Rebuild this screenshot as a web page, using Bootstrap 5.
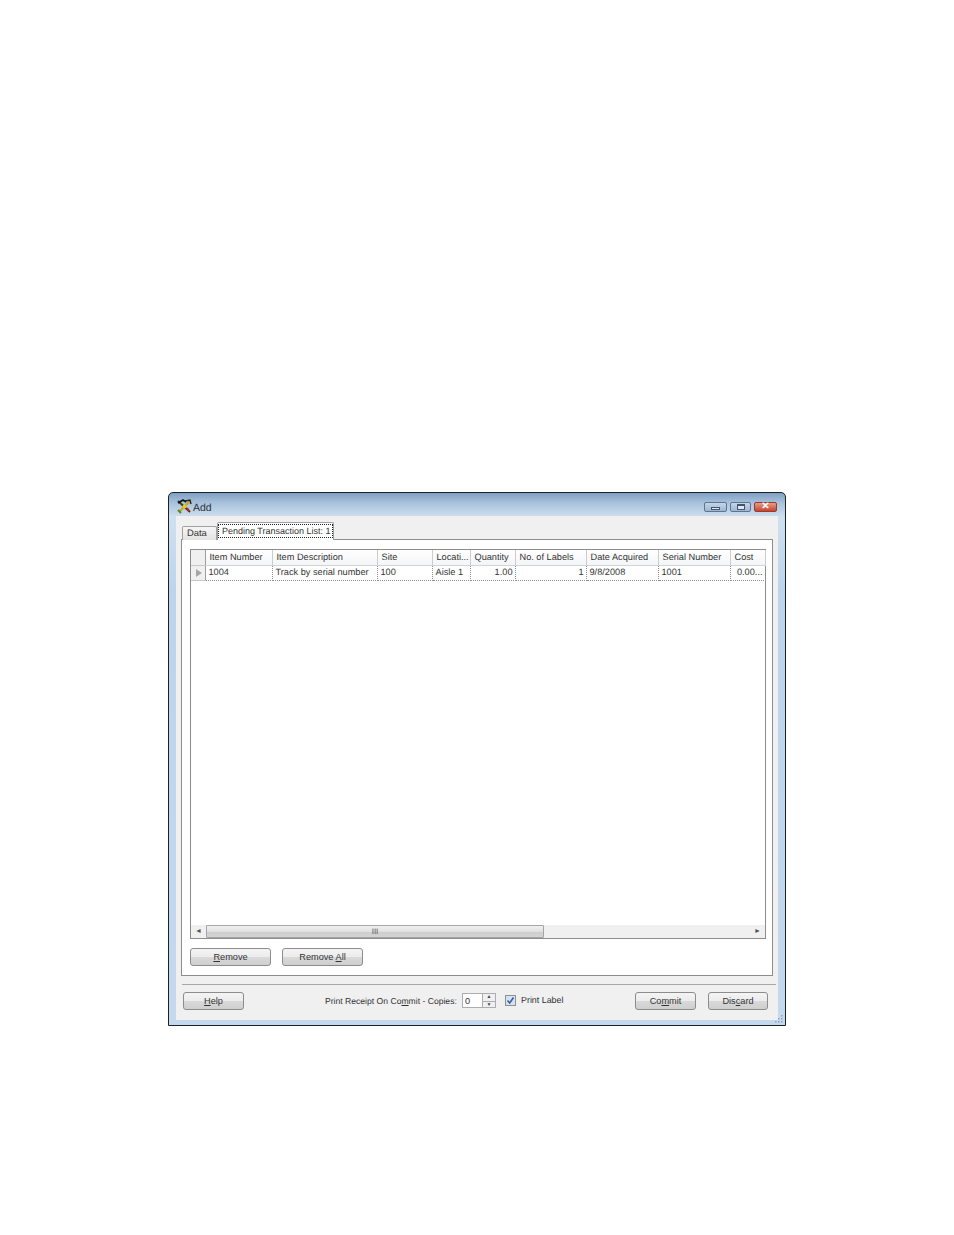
<!DOCTYPE html>
<html lang="en">
<head>
<meta charset="utf-8">
<title>Add</title>
<link href="https://cdn.jsdelivr.net/npm/bootstrap@5.3.0/dist/css/bootstrap.min.css" rel="stylesheet">
<style>
html, body { background: #fff; }
body { padding: 492px 0 0 168px; font-family: "Liberation Sans", Arial, sans-serif; font-size: 9.2px; line-height: 12px; color: #333; margin: 0; text-rendering: geometricPrecision; }
.win-frame { position: relative; width: 618px; height: 534px; border: 1px solid #1c2126; border-radius: 5px 5px 0 0; background: linear-gradient(180deg, #7f9fc3 0, #a9c2dc 10px, #cfe0f0 24px, #bcd4ec 100px, #c4d9ee 100%); }
.win-title { height: 23px; padding: 6px 8px 0 8px; }
.win-title-text { font-size: 10.5px; line-height: 14px; color: #2b3138; margin: 2px 0 0 1px; }
.win-ctl { width: 23px; height: 10px; border: 1px solid #5d7590; border-radius: 2px; background: linear-gradient(180deg, #c5d6e8, #9db6d0); margin-top: 3px; margin-left: 3px; }
.win-ctl-max { width: 21px; }
.win-ctl-close { border-color: #9a3a2a; background: linear-gradient(180deg, #e2a08e, #c9412e); color: #fff; font-weight: 700; font-size: 10px; line-height: 8px; }
.win-ctl i { display: block; border: 1px solid #42556b; background: #dfe8f2; }
.glyph-min { width: 9px; height: 3px; margin-top: 4px; }
.glyph-max { width: 8px; height: 6px; margin-top: 1px; border-top-width: 2px !important; }
.win-client { margin: 0 7px; height: 504px; background: #f0f0f0; padding: 6px 5px 0; }
.tab-strip { height: 18px; border: 0; align-items: flex-end; position: relative; z-index: 1; padding-left: 1px; }
.tab-strip .nav-link { font-size: 9.4px; line-height: 12px; color: #333; border: 1px solid #a0a0a0; border-bottom: 0; border-radius: 2px 2px 0 0; margin: 0; background: linear-gradient(180deg, #f6f6f6, #e2e2e2); height: 14px; width: 35px; padding: 0 4px; }
.tab-strip .nav-link.active { background: #fff; height: 18px; width: 117px; padding: 1px 0 0; font-size: 9px; }
.tab-focus { display: block; border: 1px dotted #222; padding: 0 3px; height: 14px; line-height: 12px; white-space: nowrap; }
.tab-panel { height: 437px; margin-top: -1px; background: #fff; border: 1px solid #8d8d8d; padding: 9px 6px 0 8px; }
.grid-box { height: 390px; border: 1px solid #8c8c8c; background: #fff; position: relative; }
.grid-table { table-layout: fixed; width: 574px; margin: 0; border-collapse: collapse; color: #333; }
.grid-table th, .grid-table td { padding: 0 2px 1px 3px; height: 15px; font-size: 9.2px; line-height: 12px; font-weight: 400; white-space: nowrap; overflow: hidden; background: transparent; color: #333; vertical-align: middle; }
.grid-table th { padding: 0 0 1px 4px; background: linear-gradient(180deg, #fff, #f4f5f7); border-right: 1px solid #c9ccd0; border-bottom: 1px solid #d2d4d7; }
.grid-table td { border-right: 1px dotted #8d8d8d; border-bottom: 1px dotted #8d8d8d; }
.grid-table th.sel-col, .grid-table td.sel-col { background: #f0f0f0; border-right: 1px solid #9d9d9d; border-bottom: 1px solid #c8c8c8; padding: 0; }
.row-mark { display: block; width: 0; height: 0; margin-left: 5px; border-left: 6px solid #a6a6a6; border-top: 4px solid transparent; border-bottom: 4px solid transparent; }
.scroll-bar { position: absolute; left: 0; right: 0; bottom: 0; height: 13px; background: #f0f0f0; display: flex; align-items: center; }
.scroll-arrow { width: 15px; text-align: center; color: #555; font-size: 7px; line-height: 13px; }
.scroll-thumb { width: 338px; height: 13px; border: 1px solid #a5a5a5; border-radius: 1px; background: linear-gradient(180deg, #f1f1f1 0, #e0e0e0 50%, #cecece 51%, #d3d3d3 100%); text-align: center; font-size: 8px; line-height: 11px; color: #555; }
.win-btn { font-size: 9.2px; line-height: 12px; color: #333; padding: 0; width: 81px; height: 18px; border: 1px solid #8c8c8c; border-radius: 3px; background: linear-gradient(180deg, #f4f4f4 0, #ececec 48%, #d9d9d9 52%, #cfcfcf 100%); }
.win-btn:hover { color: #333; border-color: #8c8c8c; }
.btn-row { margin-top: 9px; gap: 11px; }
.btn-short { width: 61px; }
.btn-discard { width: 60px; }
.foot-rule { margin: 8px -3px 0 1px; border: 0; border-top: 1px solid #a8a8a8; opacity: 1; height: 0; }
.foot-row { margin-top: 7px; padding-left: 2px; height: 20px; align-items: flex-start; }
.copies-label { margin: 3px 0 0 81px; white-space: nowrap; width: 132px; font-size: 8.6px; }
.copies-input { width: 21px; height: 15px; margin: 1px 0 0 5px; border: 1px solid #abadb3; background: #fff; padding: 0 2px; font-size: 9.2px; line-height: 11px; border-radius: 0; box-shadow: none; color: #333; }
.copies-spin { width: 13px; height: 15px; margin-top: 1px; border: 1px solid #abadb3; border-left: 0; background: #f0f0f0; }
.copies-spin span { display: block; height: 7px; text-align: center; font-size: 5px; line-height: 7px; color: #444; }
.copies-spin span + span { border-top: 1px solid #abadb3; height: 6px; line-height: 6px; }
.print-check { width: 11px; height: 11px; margin: 3px 0 0 9px; border: 1px solid #8e8f8f; background: #d4e3f4; }
.print-check svg { display: block; }
.print-label { margin: 2px 72px 0 5px; white-space: nowrap; width: 42px; font-size: 8.9px; }
.btn-gap { margin-left: 12px; }
.size-grip { position: absolute; right: 1px; bottom: 1px; width: 10px; height: 10px; }
</style>
</head>
<body>
<div class="win-frame">
  <div class="win-title d-flex align-items-start">
    <svg width="15" height="15" viewBox="0 0 15 15" aria-hidden="true">
      <path d="M1 2 L13 13" stroke="#3a3a20" stroke-width="2"/>
      <path d="M13 2 L2 13" stroke="#c9a514" stroke-width="2"/>
      <path d="M1 4 L6 1 L9 3" stroke="#111" stroke-width="1.6" fill="none"/>
      <path d="M8 2 L13 1 L14 5" stroke="#222" stroke-width="1.4" fill="none"/>
      <path d="M1 11 L4 14" stroke="#4f8a2c" stroke-width="2"/>
      <path d="M10 9 L12 12" stroke="#c8201c" stroke-width="2"/>
      <circle cx="7.5" cy="7.5" r="2" fill="#e8c91e"/>
    </svg>
    <span class="win-title-text">Add</span>
    <div class="ms-auto d-flex">
      <div class="win-ctl d-flex justify-content-center"><i class="glyph-min"></i></div>
      <div class="win-ctl win-ctl-max d-flex justify-content-center"><i class="glyph-max"></i></div>
      <div class="win-ctl win-ctl-close text-center">✕</div>
    </div>
  </div>
  <div class="win-client">
    <ul class="nav tab-strip">
      <li class="nav-item"><a class="nav-link" href="#">Data</a></li>
      <li class="nav-item"><a class="nav-link active" href="#"><span class="tab-focus">Pending Transaction List: 1</span></a></li>
    </ul>
    <div class="tab-panel">
      <div class="grid-box">
        <table class="table grid-table">
          <colgroup>
            <col style="width:14px"><col style="width:67px"><col style="width:105px"><col style="width:55px"><col style="width:38px"><col style="width:45px"><col style="width:71px"><col style="width:72px"><col style="width:72px"><col style="width:35px">
          </colgroup>
          <thead>
            <tr><th class="sel-col"></th><th>Item Number</th><th>Item Description</th><th>Site</th><th>Locati...</th><th>Quantity</th><th>No. of Labels</th><th>Date Acquired</th><th>Serial Number</th><th>Cost</th></tr>
          </thead>
          <tbody>
            <tr><td class="sel-col"><span class="row-mark"></span></td><td>1004</td><td>Track by serial number</td><td>100</td><td>Aisle 1</td><td class="text-end">1.00</td><td class="text-end">1</td><td>9/8/2008</td><td>1001</td><td class="text-end">0.00...</td></tr>
          </tbody>
        </table>
        <div class="scroll-bar">
          <div class="scroll-arrow">◄</div>
          <div class="scroll-thumb">III</div>
          <div class="scroll-arrow ms-auto">►</div>
        </div>
      </div>
      <div class="d-flex btn-row">
        <button type="button" class="btn win-btn"><u>R</u>emove</button>
        <button type="button" class="btn win-btn">Remove <u>A</u>ll</button>
      </div>
    </div>
    <hr class="foot-rule">
    <div class="d-flex foot-row">
      <button type="button" class="btn win-btn btn-short"><u>H</u>elp</button>
      <span class="copies-label">Print Receipt On Co<u>m</u>mit - Copies:</span>
      <input class="form-control copies-input" type="text" value="0" aria-label="Copies">
      <div class="copies-spin"><span>▲</span><span>▼</span></div>
      <div class="print-check"><svg width="9" height="9" viewBox="0 0 9 9" aria-hidden="true"><path d="M1.5 4.5 L3.7 7 L7.5 1.5" fill="none" stroke="#3f5f9a" stroke-width="1.6"/></svg></div>
      <span class="print-label">Print Label</span>
      <button type="button" class="btn win-btn btn-short">Co<u>m</u>mit</button>
      <button type="button" class="btn win-btn btn-short btn-discard btn-gap">Dis<u>c</u>ard</button>
    </div>
  </div>
  <svg class="size-grip" viewBox="0 0 10 10" aria-hidden="true"><g fill="#8fa3b8"><rect x="7" y="1" width="1.5" height="1.5"/><rect x="4" y="4" width="1.5" height="1.5"/><rect x="7" y="4" width="1.5" height="1.5"/><rect x="1" y="7" width="1.5" height="1.5"/><rect x="4" y="7" width="1.5" height="1.5"/><rect x="7" y="7" width="1.5" height="1.5"/></g></svg>
</div>
<script src="https://cdn.jsdelivr.net/npm/bootstrap@5.3.0/dist/js/bootstrap.bundle.min.js"></script>
</body>
</html>
